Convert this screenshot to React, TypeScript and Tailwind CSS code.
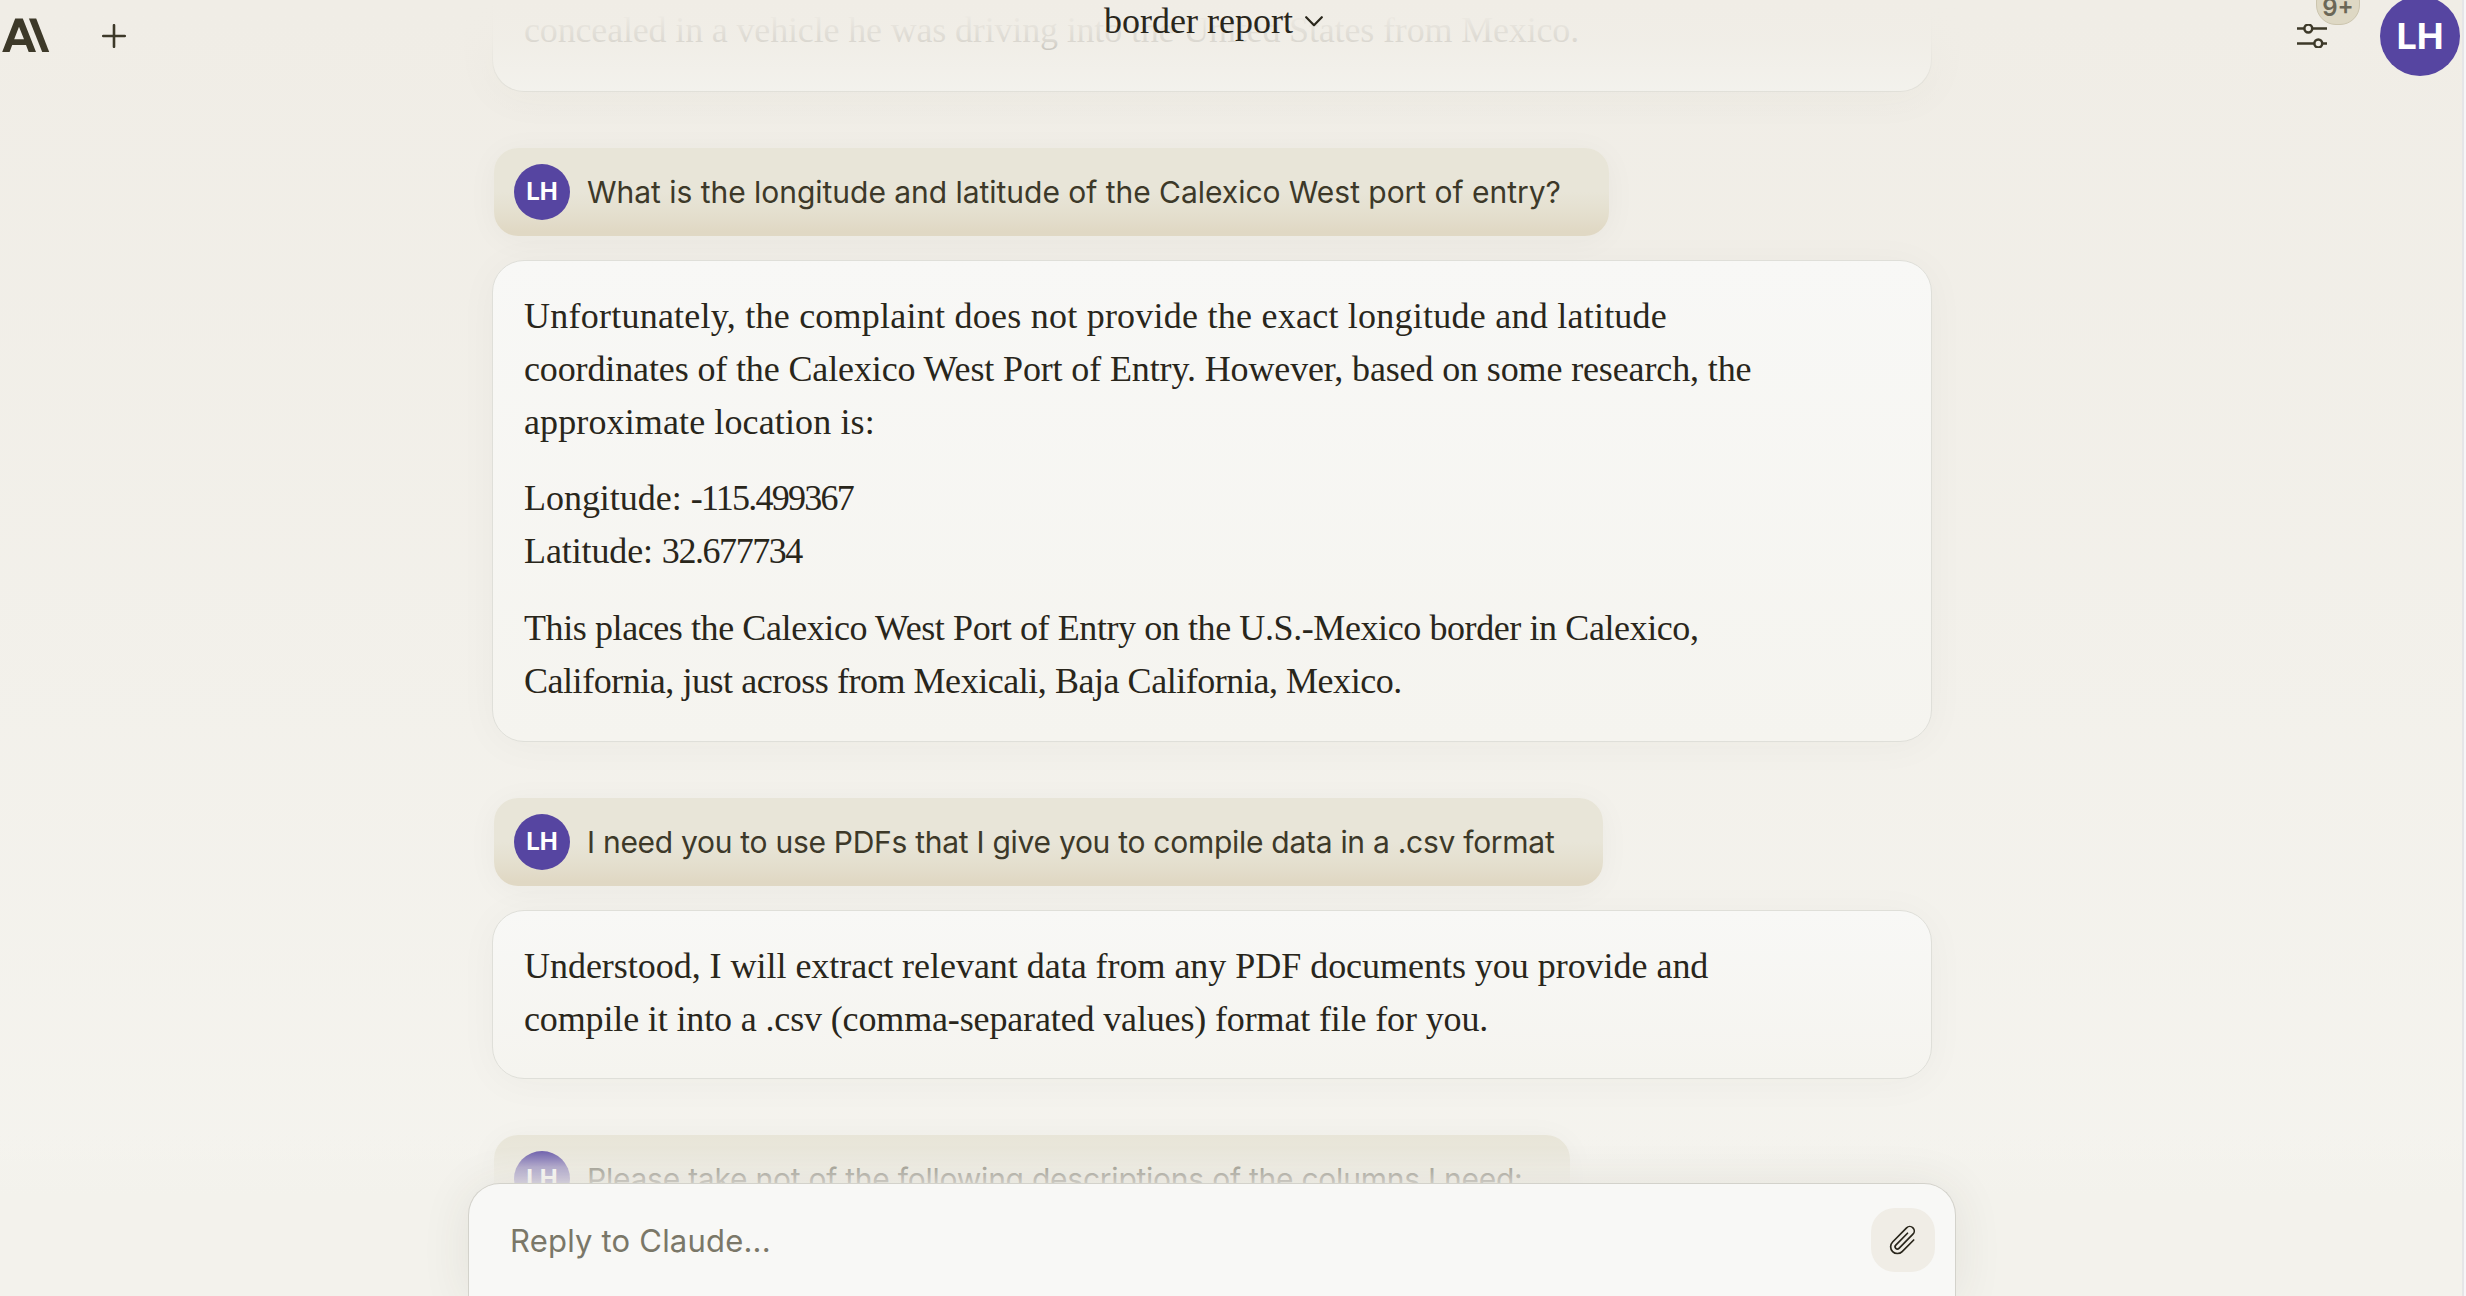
import React from 'react';
import { PiPaperclipLight } from 'react-icons/pi';

type Line = { text: string; spacing: string; value?: string; valueSpacing?: string };

const FIRST_REPLY: Line[][] = [
    [
        { text: 'Unfortunately, the complaint does not provide the exact longitude and latitude', spacing: 'tracking-[0.24px]' },
        { text: 'coordinates of the Calexico West Port of Entry. However, based on some research, the', spacing: 'tracking-[-0.13px]' },
        { text: 'approximate location is:', spacing: 'tracking-[0.12px]' },
    ],
    [
        { text: 'Longitude: ', spacing: 'tracking-[-0.03px]', value: '-115.499367', valueSpacing: 'tracking-[-1.75px]' },
        { text: 'Latitude: ', spacing: 'tracking-[-0.11px]', value: '32.677734', valueSpacing: 'tracking-[-1.44px]' },
    ],
    [
        { text: 'This places the Calexico West Port of Entry on the U.S.-Mexico border in Calexico,', spacing: 'tracking-[-0.41px]' },
        { text: 'California, just across from Mexicali, Baja California, Mexico.', spacing: 'tracking-[-0.46px]' },
    ],
];

const SECOND_REPLY: Line[][] = [
    [
        { text: 'Understood, I will extract relevant data from any PDF documents you provide and', spacing: 'tracking-[-0.03px]' },
        { text: 'compile it into a .csv (comma-separated values) format file for you.', spacing: 'tracking-[-0.14px]' },
    ],
];

const Logo = () => (
    <svg className="block" width="50" height="72" viewBox="0 0 50 72" fill="#3d3929" aria-label="Anthropic">
        <path fillRule="evenodd" d="M15.2 18.5H22.8L36 52H28.7L26 45H12.2L9.6 52H2.2ZM19 26.8L14.2 39.2H24Z" />
        <path d="M28.9 18.5H36.2L49.2 52H42.2Z" />
    </svg>
);

const Sliders = () => (
    <svg className="block" width="30" height="24" viewBox="0 0 30 24" fill="none" stroke="#3d3929" strokeWidth="2.5">
        <path d="M0 4.5H7.3M15.3 4.5H30M0 19.5H17.3M25.3 19.5H30" />
        <circle cx="11.3" cy="4.5" r="3.9" />
        <circle cx="21.3" cy="19.5" r="3.9" />
    </svg>
);

const Header = () => (
    <header className="absolute inset-x-0 top-0 z-20 h-[72px]">
        <div className="flex items-start justify-between w-[2462px]">
            <div className="flex items-center">
                <Logo />
                <button className="ml-[52px]" aria-label="New chat">
                    <svg className="block" width="24" height="24" viewBox="0 0 24 24" stroke="#3d3929" strokeWidth="2.6" strokeLinecap="round">
                        <path d="M12 1.2V22.8M1.2 12H22.8" />
                    </svg>
                </button>
            </div>
            <div className="flex items-start">
                <div className="relative mt-6 mr-[53px]">
                    <Sliders />
                    <span className="absolute -top-[43px] left-[19px] flex h-11 w-11 items-center justify-center rounded-[20px] border border-[#ccc5ae] bg-[#ded8c4] pt-2.5 text-[24px] font-semibold text-[#6b6757]">9+</span>
                </div>
                <span className="-mt-1 mr-0.5 flex h-20 w-20 items-center justify-center rounded-full bg-[#5645a1] text-4xl font-bold text-white">LH</span>
            </div>
        </div>
        {/* Chat title, centred over the conversation */}
        <button className="absolute top-0 left-[1104px] flex items-center gap-3 font-['Liberation_Serif',serif] text-4xl leading-[43px] text-[#29261b]">
            border report
            <svg className="block" width="18" height="11" viewBox="0 0 18 11" fill="none" stroke="#29261b" strokeWidth="2.2" strokeLinecap="round" strokeLinejoin="round">
                <path d="M1.2 1.2L9 9.2L16.8 1.2" />
            </svg>
        </button>
    </header>
);

const UserMessage = ({ text, className }: { text: string; className: string }) => (
    <div className={`ml-0.5 flex h-[88px] shrink-0 items-center gap-[17px] whitespace-nowrap rounded-3xl bg-[linear-gradient(to_bottom,#e8e5d8_50%,#e4dfce_75%,#e0d8c4_95%)] pl-5 text-[30px] text-[#3d3929] shadow-[0_4px_32px_rgba(61,57,41,0.04)] ${className}`}>
        <span className="flex h-14 w-14 items-center justify-center rounded-full bg-[#5645a1] text-2xl font-bold tracking-normal text-white">LH</span>
        <p>{text}</p>
    </div>
);

const Reply = ({ paragraphs, className }: { paragraphs: Line[][]; className: string }) => (
    <div className={`mt-6 mb-14 flex shrink-0 flex-col gap-6 rounded-[32px] border border-[#dfdfd9] bg-linear-to-b from-[#f8f8f6] to-[#f5f4ef] pt-[29px] pl-[31px] font-['Liberation_Serif',serif] text-4xl leading-[52.8px] text-[#29261b] shadow-[0_4px_40px_rgba(61,57,41,0.035)] ${className}`}>
        {paragraphs.map((lines, index) => (
            <p key={index}>
                {lines.map((line) => (
                    <span key={line.text} className={`block whitespace-nowrap ${line.spacing}`}>
                        {line.text}
                        {line.value && <span className={line.valueSpacing}>{line.value}</span>}
                    </span>
                ))}
            </p>
        ))}
    </div>
);

const Composer = () => (
    <div className="absolute bottom-0 left-[468px] z-20 flex h-[113px] w-[1488px] items-start justify-between rounded-t-[32px] border border-b-0 border-[#d3d2cb] bg-[#f8f8f6] pt-6 pr-5 pl-[41px] shadow-[0_4px_50px_rgba(61,57,41,0.09)]">
        <p className="text-[31px] leading-[66px] tracking-[0.2px] text-[#7a7768]">Reply to Claude...</p>
        <button className="flex h-16 w-16 items-center justify-center rounded-3xl bg-[#f0ede6] text-[#29261b]" aria-label="Attach">
            <PiPaperclipLight size={36} />
        </button>
    </div>
);

const App: React.FC = () => {
    return (
        <div className="relative flex h-[1296px] w-full overflow-hidden bg-linear-to-b from-[#f0ede6] to-[#f5f4ef] font-['Inter',sans-serif]">
            <Header />

            <main className="flex w-[2424px] shrink-0 flex-col items-center">
                <div className="flex w-[1440px] flex-col items-start">
                    {/* Tail of the previous reply, scrolled under the header */}
                    <div className="mb-14 flex h-[92px] w-full shrink-0 items-start rounded-b-[32px] border border-t-0 border-[#d6d6cf] bg-[#f5f5f1] pt-1 pl-[31px] font-['Liberation_Serif',serif] text-4xl leading-[52.8px] tracking-[-0.16px] text-[#29261b] shadow-[0_4px_40px_rgba(61,57,41,0.05)]">
                        concealed in a vehicle he was driving into the United States from Mexico.
                    </div>
                    <UserMessage text="What is the longitude and latitude of the Calexico West port of entry?" className="w-[1115px] tracking-[-0.03px]" />
                    <Reply paragraphs={FIRST_REPLY} className="h-[482px] w-full" />
                    <UserMessage text="I need you to use PDFs that I give you to compile data in a .csv format" className="w-[1109px] tracking-[-0.28px]" />
                    <Reply paragraphs={SECOND_REPLY} className="h-[169px] w-full" />
                    <UserMessage text="Please take not of the following descriptions of the columns I need:" className="w-[1076px] tracking-[-0.24px]" />
                </div>
            </main>

            {/* Fades under the header and above the composer */}
            <div className="absolute inset-x-0 top-0 z-10 h-36 bg-[linear-gradient(to_bottom,#f0ede6_0%,#f0ede6fa_12%,#f0ede6e6_28%,#f0ede670_62%,#f0ede600_100%)]"></div>
            <div className="absolute inset-x-0 bottom-0 z-10 h-[161px] bg-[linear-gradient(to_bottom,#f3f2ec00_0,#f3f2ec20_14px,#f3f2ec98_32px,#f3f2ecd0_48px,#f3f2ec_60px)]"></div>

            <Composer />

            {/* Window edge */}
            <div className="absolute inset-y-0 right-0 z-30 w-1 border-l-2 border-[#e6e5e7] bg-[#f6f6f8]"></div>
        </div>
    );
};

export default App;
